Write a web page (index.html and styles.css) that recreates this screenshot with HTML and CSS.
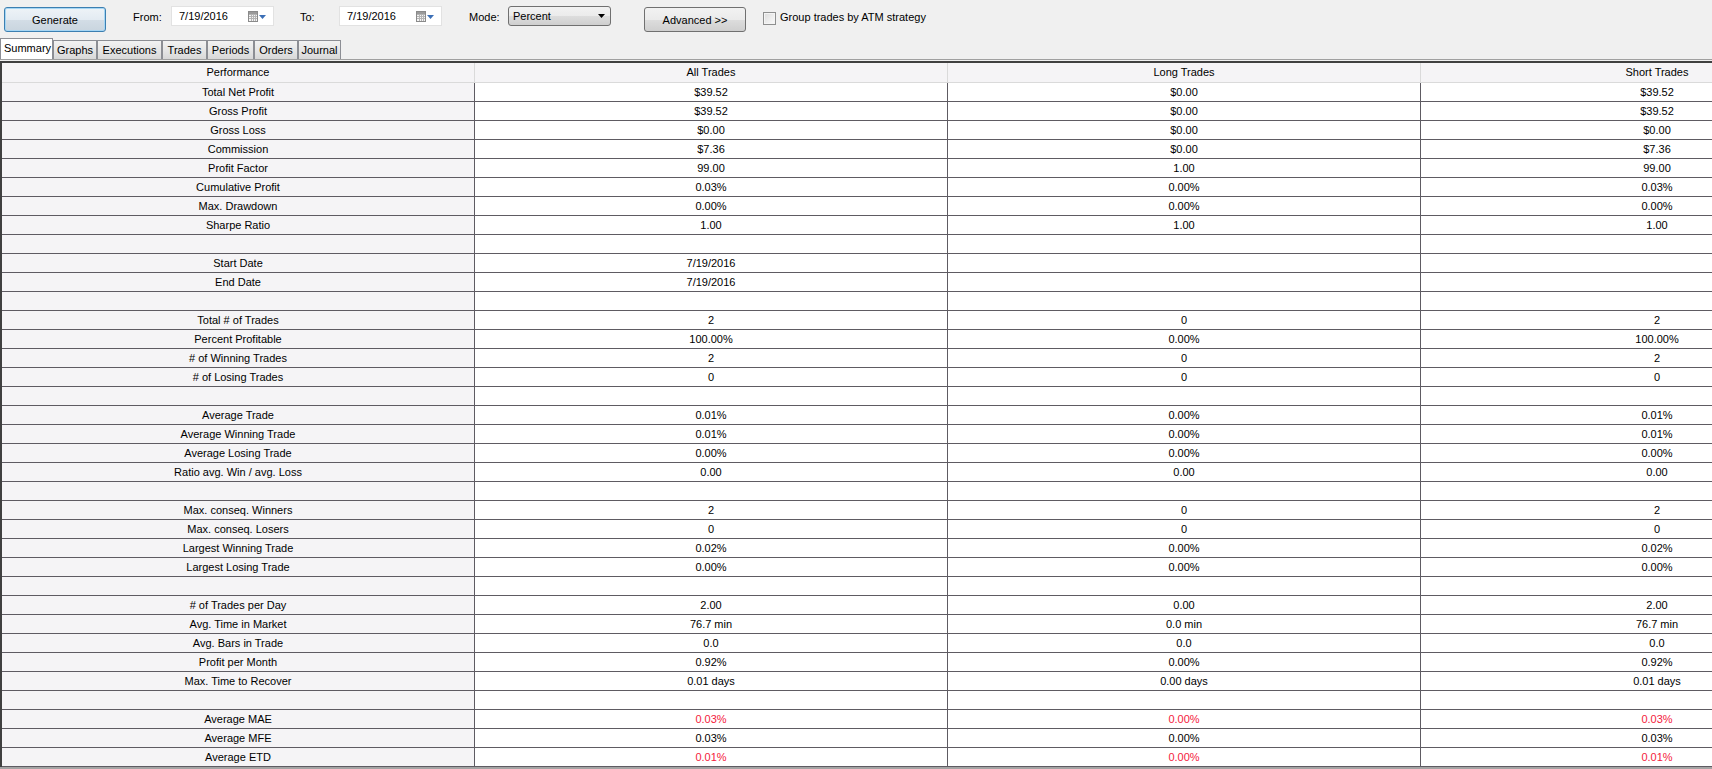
FILE: index.html
```html
<!DOCTYPE html>
<html lang="en">
<head>
  <meta charset="UTF-8">
  <title>Strategy Performance</title>
  <link rel="stylesheet" href="styles.css">
</head>
<body>
  <!-- top bar: period, mode and options -->
  <div class="toolbar">
    <button class="btn btn-generate">Generate</button>
    <span class="lbl lbl-from">From:</span>
    <div class="datebox">
      <span>7/19/2016</span>
      <svg class="cal" width="18" height="11" viewBox="0 0 18 11">
        <rect x="0.5" y="0.5" width="9" height="10" fill="#f4f4f4" stroke="#8a8a8a"/>
        <path d="M1 3.5h8M1 5.5h8M1 7.5h8M3.5 3v7M5.5 3v7M7.5 3v7" stroke="#b4b4b4"/>
        <rect x="1" y="1" width="8" height="2" fill="#9a9a9a"/>
        <path d="M11 4h7l-3.5 4z" fill="#3b6fb6"/>
      </svg>
    </div>
    <span class="lbl lbl-to">To:</span>
    <div class="datebox">
      <span>7/19/2016</span>
      <svg class="cal" width="18" height="11" viewBox="0 0 18 11">
        <rect x="0.5" y="0.5" width="9" height="10" fill="#f4f4f4" stroke="#8a8a8a"/>
        <path d="M1 3.5h8M1 5.5h8M1 7.5h8M3.5 3v7M5.5 3v7M7.5 3v7" stroke="#b4b4b4"/>
        <rect x="1" y="1" width="8" height="2" fill="#9a9a9a"/>
        <path d="M11 4h7l-3.5 4z" fill="#3b6fb6"/>
      </svg>
    </div>
    <span class="lbl lbl-mode">Mode:</span>
    <div class="select">
      <span>Percent</span>
      <svg width="7" height="4" viewBox="0 0 7 4"><path d="M0 0h7L3.5 4z" fill="#000"/></svg>
    </div>
    <button class="btn btn-advanced">Advanced &gt;&gt;</button>
    <span class="check"></span>
    <span class="lbl lbl-check">Group trades by ATM strategy</span>
  </div>

  <!-- tab strip -->
  <div class="tabs">
    <div class="tab active" style="width:53px">Summary</div>
    <div class="tab" style="width:44px">Graphs</div>
    <div class="tab" style="width:65px">Executions</div>
    <div class="tab" style="width:45px">Trades</div>
    <div class="tab" style="width:47px">Periods</div>
    <div class="tab" style="width:44px">Orders</div>
    <div class="tab" style="width:43px">Journal</div>
  </div>

  <!-- summary grid -->
  <div class="grid-frame">
    <div class="grid">
      <div class="row head"><div>Performance</div><div>All Trades</div><div>Long Trades</div><div>Short Trades</div></div>

      <div class="row"><div>Total Net Profit</div><div>$39.52</div><div>$0.00</div><div>$39.52</div></div>
      <div class="row"><div>Gross Profit</div><div>$39.52</div><div>$0.00</div><div>$39.52</div></div>
      <div class="row"><div>Gross Loss</div><div>$0.00</div><div>$0.00</div><div>$0.00</div></div>
      <div class="row"><div>Commission</div><div>$7.36</div><div>$0.00</div><div>$7.36</div></div>
      <div class="row"><div>Profit Factor</div><div>99.00</div><div>1.00</div><div>99.00</div></div>
      <div class="row"><div>Cumulative Profit</div><div>0.03%</div><div>0.00%</div><div>0.03%</div></div>
      <div class="row"><div>Max. Drawdown</div><div>0.00%</div><div>0.00%</div><div>0.00%</div></div>
      <div class="row"><div>Sharpe Ratio</div><div>1.00</div><div>1.00</div><div>1.00</div></div>
      <div class="row"><div></div><div></div><div></div><div></div></div>

      <div class="row"><div>Start Date</div><div>7/19/2016</div><div></div><div></div></div>
      <div class="row"><div>End Date</div><div>7/19/2016</div><div></div><div></div></div>
      <div class="row"><div></div><div></div><div></div><div></div></div>

      <div class="row"><div>Total # of Trades</div><div>2</div><div>0</div><div>2</div></div>
      <div class="row"><div>Percent Profitable</div><div>100.00%</div><div>0.00%</div><div>100.00%</div></div>
      <div class="row"><div># of Winning Trades</div><div>2</div><div>0</div><div>2</div></div>
      <div class="row"><div># of Losing Trades</div><div>0</div><div>0</div><div>0</div></div>
      <div class="row"><div></div><div></div><div></div><div></div></div>

      <div class="row"><div>Average Trade</div><div>0.01%</div><div>0.00%</div><div>0.01%</div></div>
      <div class="row"><div>Average Winning Trade</div><div>0.01%</div><div>0.00%</div><div>0.01%</div></div>
      <div class="row"><div>Average Losing Trade</div><div>0.00%</div><div>0.00%</div><div>0.00%</div></div>
      <div class="row"><div>Ratio avg. Win / avg. Loss</div><div>0.00</div><div>0.00</div><div>0.00</div></div>
      <div class="row"><div></div><div></div><div></div><div></div></div>

      <div class="row"><div>Max. conseq. Winners</div><div>2</div><div>0</div><div>2</div></div>
      <div class="row"><div>Max. conseq. Losers</div><div>0</div><div>0</div><div>0</div></div>
      <div class="row"><div>Largest Winning Trade</div><div>0.02%</div><div>0.00%</div><div>0.02%</div></div>
      <div class="row"><div>Largest Losing Trade</div><div>0.00%</div><div>0.00%</div><div>0.00%</div></div>
      <div class="row"><div></div><div></div><div></div><div></div></div>

      <div class="row"><div># of Trades per Day</div><div>2.00</div><div>0.00</div><div>2.00</div></div>
      <div class="row"><div>Avg. Time in Market</div><div>76.7 min</div><div>0.0 min</div><div>76.7 min</div></div>
      <div class="row"><div>Avg. Bars in Trade</div><div>0.0</div><div>0.0</div><div>0.0</div></div>
      <div class="row"><div>Profit per Month</div><div>0.92%</div><div>0.00%</div><div>0.92%</div></div>
      <div class="row"><div>Max. Time to Recover</div><div>0.01 days</div><div>0.00 days</div><div>0.01 days</div></div>
      <div class="row"><div></div><div></div><div></div><div></div></div>

      <div class="row neg"><div>Average MAE</div><div>0.03%</div><div>0.00%</div><div>0.03%</div></div>
      <div class="row"><div>Average MFE</div><div>0.03%</div><div>0.00%</div><div>0.03%</div></div>
      <div class="row neg"><div>Average ETD</div><div>0.01%</div><div>0.00%</div><div>0.01%</div></div>
    </div>
  </div>
</body>
</html>
```

FILE: styles.css
```css
html, body {
  margin: 0;
  padding: 0;
  height: 769px;
  overflow: hidden;
}

body {
  background-color: #f0f0f0;
  font-family: "Liberation Sans", Arial, sans-serif;
  font-size: 11px;
  color: #000;
}

/* ---- toolbar ---- */
.toolbar {
  display: flex;
  align-items: flex-start;
  height: 38px;
}

.btn {
  box-sizing: border-box;
  width: 102px;
  height: 25px;
  margin-top: 7px;
  padding: 0;
  border: 1px solid #707070;
  border-radius: 3px;
  background: linear-gradient(#f2f2f2, #ebebeb 50%, #dddddd 51%, #cfcfcf);
  font-family: inherit;
  font-size: 11px;
  color: #000;
}

.btn-generate {
  margin-left: 4px;
  border-color: #3c7fb1;
  box-shadow: inset 0 0 0 1px #a6d6f4;
  background: linear-gradient(#eef3f7, #e3ebf2 50%, #d3dde6 51%, #c9d5df);
}

.btn-advanced {
  margin-left: 33px;
}

.lbl {
  margin-top: 11px;
  line-height: 13px;
  white-space: nowrap;
}

.lbl-from { margin-left: 27px; width: 38px; }
.lbl-to { margin-left: 26px; width: 39px; }
.lbl-mode { margin-left: 27px; width: 39px; }
.lbl-check { margin-left: 4px; }

.datebox {
  box-sizing: border-box;
  display: flex;
  align-items: center;
  width: 103px;
  height: 20px;
  margin-top: 6px;
  padding: 0 7px 0 7px;
  background: #fff;
  border: 1px solid #e2e2e2;
}

.datebox .cal {
  margin-left: auto;
}

.select {
  box-sizing: border-box;
  display: flex;
  align-items: center;
  justify-content: space-between;
  width: 103px;
  height: 20px;
  margin-top: 6px;
  padding: 0 5px 1px 4px;
  border: 1px solid #707070;
  border-radius: 3px;
  background: linear-gradient(#f2f2f2, #ebebeb 50%, #dddddd 51%, #cfcfcf);
}

.check {
  box-sizing: border-box;
  width: 13px;
  height: 13px;
  margin: 12px 0 0 17px;
  border: 1px solid #8e8f8f;
  background: linear-gradient(135deg, #dcdcdc, #fbfbfb);
  box-shadow: inset 0 0 0 1px #f4f4f4;
}

/* ---- tabs ---- */
.tabs {
  display: flex;
  align-items: flex-end;
  height: 21px;
}

.tab {
  box-sizing: border-box;
  height: 19px;
  line-height: 18px;
  text-align: center;
  border: 1px solid #8c8e94;
  border-bottom: none;
  background: linear-gradient(#f2f2f2, #e6e6e6 50%, #d8d8d8);
  white-space: nowrap;
}

.tab.active {
  height: 21px;
  line-height: 19px;
  text-align: left;
  padding-left: 3px;
  background: #fff;
}

/* ---- grid ---- */
.grid-frame {
  border-top: 1px solid #a0a0a0;
  border-bottom: 2px solid #a4a4a4;
  padding-top: 1px;
  overflow: hidden;
}

.grid {
  width: max-content;
  border-top: 2px solid #404040;
  border-left: 2px solid #404040;
}

.row {
  display: grid;
  grid-template-columns: repeat(4, 473px);
}

.row > div {
  box-sizing: border-box;
  height: 19px;
  line-height: 18px;
  text-align: center;
  white-space: nowrap;
  background: #fff;
  border-right: 1px solid #5e5b62;
  border-bottom: 1px solid #5e5b62;
}

.row > div:first-child {
  background: #f5f4f6;
}

.head > div {
  height: 20px;
  line-height: 19px;
  background: #f5f4f6;
  border-color: #dadada;
}

.neg > div:not(:first-child) {
  color: #f4203c;
}
```
